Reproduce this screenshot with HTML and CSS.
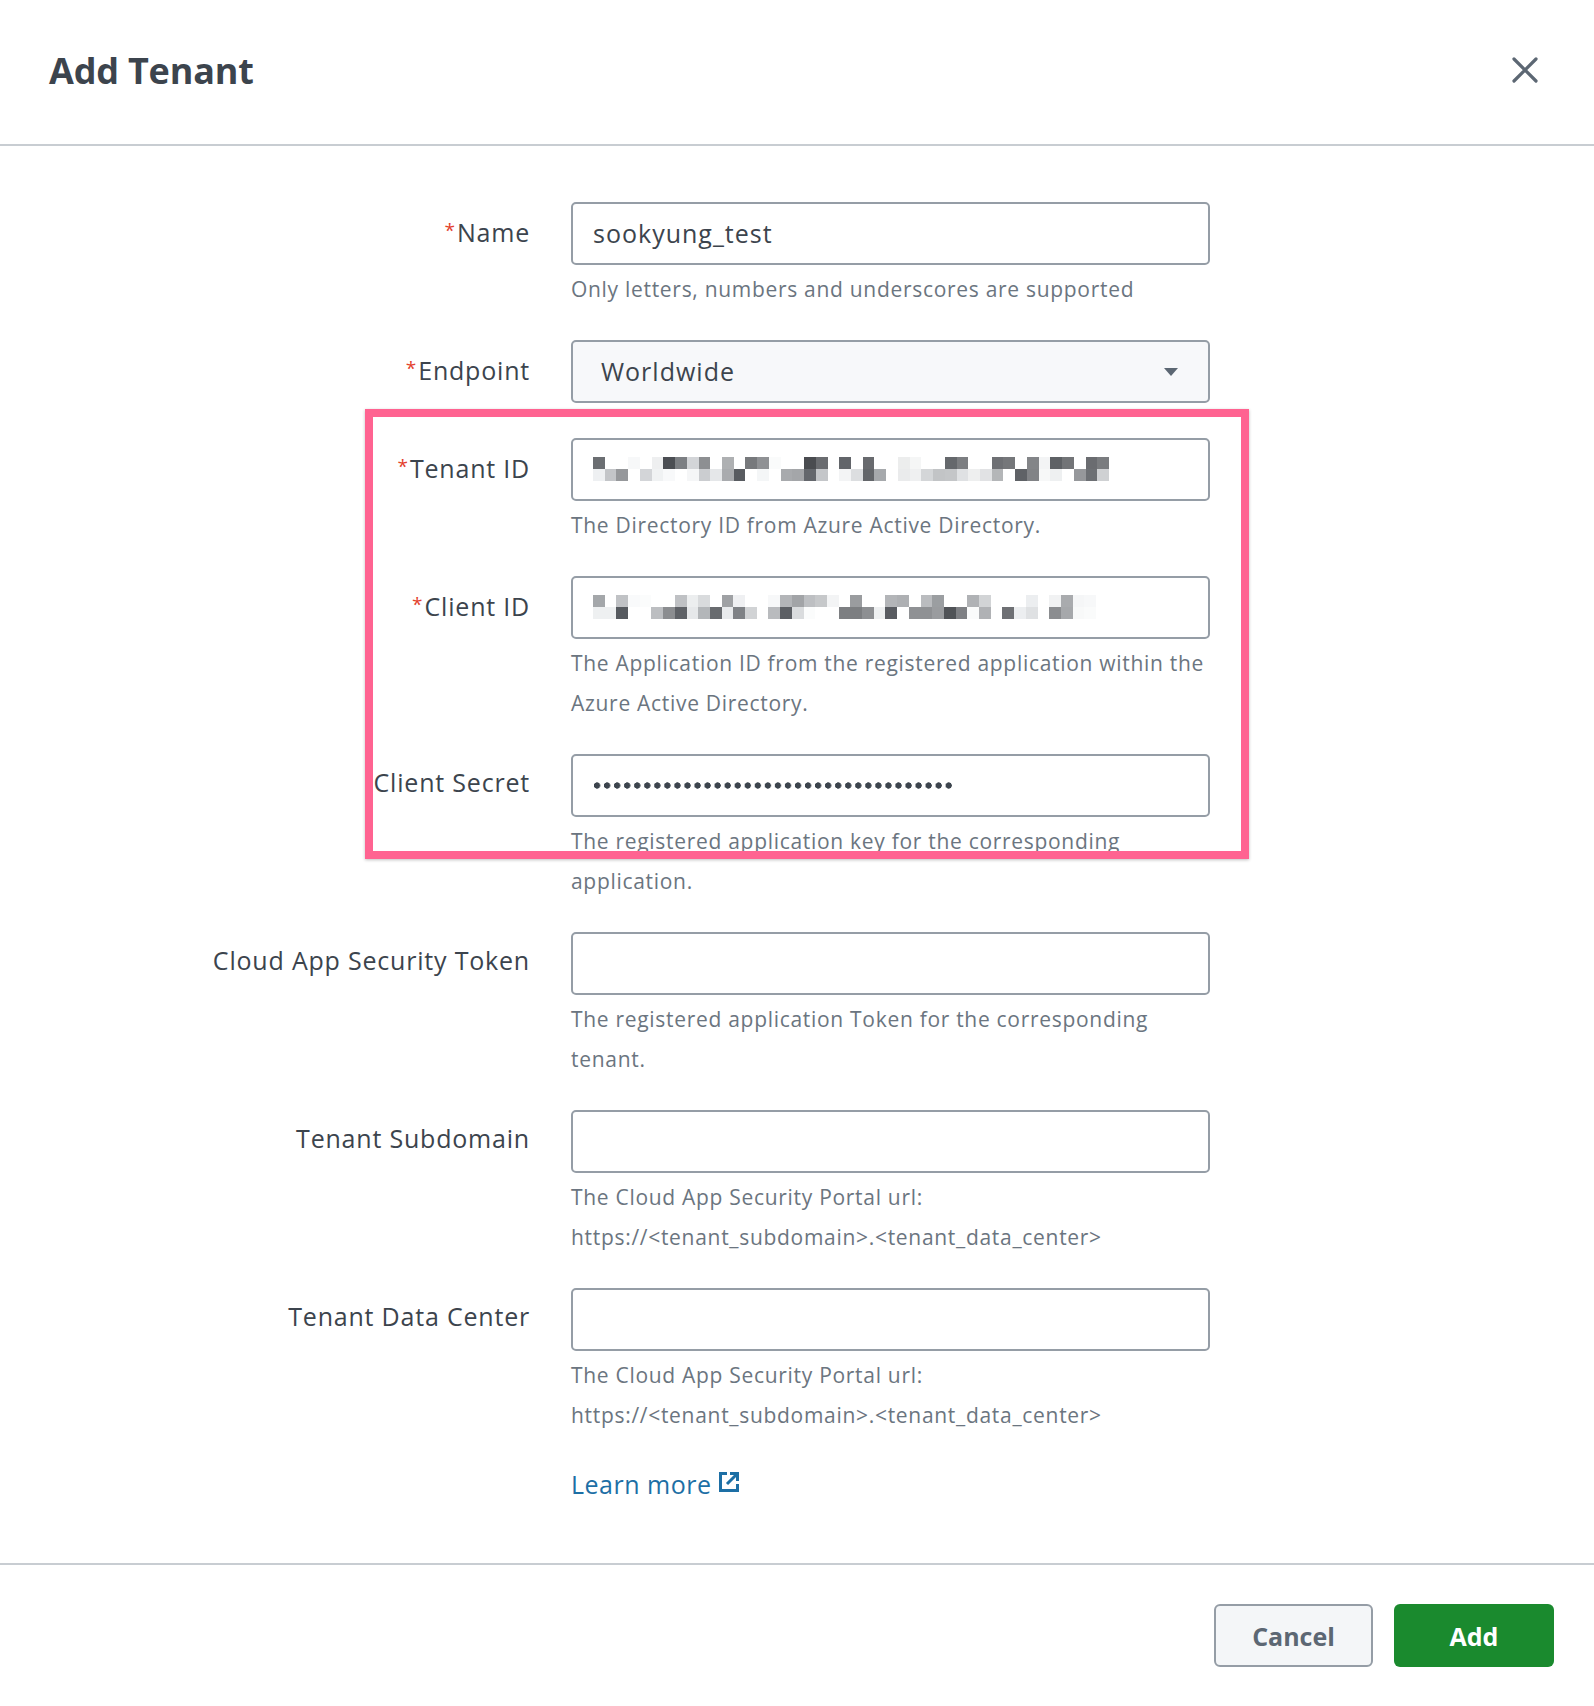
FILE: index.html
```html
<!DOCTYPE html>
<html lang="en">
<head>
<meta charset="utf-8">
<title>Add Tenant</title>
<link rel="stylesheet" href="styles.css">
</head>
<body>
<div class="modal">
  <header class="modal-header">
    <h1 class="modal-title">Add Tenant</h1>
    <button class="close-btn" aria-label="Close">
      <svg width="26" height="26" viewBox="0 0 26 26"><path d="M2 2 L24 24 M24 2 L2 24" stroke="#5c6773" stroke-width="3.2" stroke-linecap="round" fill="none"/></svg>
    </button>
  </header>

  <main class="modal-body">
    <div class="highlight"></div>
    <form class="form">
      <div class="row">
        <label class="label"><span class="req">*</span>Name</label>
        <div class="field">
          <div class="input"><span class="value">sookyung_test</span></div>
          <p class="help">Only letters, numbers and underscores are supported</p>
        </div>
      </div>

      <div class="row row-select">
        <label class="label"><span class="req">*</span>Endpoint</label>
        <div class="field">
          <div class="input select"><span class="value">Worldwide</span><span class="caret"></span></div>
        </div>
      </div>

      <div class="row">
        <label class="label"><span class="req">*</span>Tenant ID</label>
        <div class="field">
          <div class="input">
            <svg class="blur" width="516" height="24" viewBox="0 0 44 2" preserveAspectRatio="none" shape-rendering="crispEdges">
              <g>
                <rect x="0" y="0" width="1" height="1" fill="#6b6e72"/>
                <rect x="3" y="0" width="1" height="1" fill="#f7f8f9"/>
                <rect x="5" y="0" width="1" height="1" fill="#eeeff0"/>
                <rect x="6" y="0" width="1" height="1" fill="#4b4e53"/>
                <rect x="7" y="0" width="1" height="1" fill="#7c7f83"/>
                <rect x="8" y="0" width="1" height="1" fill="#d3d5d8"/>
                <rect x="9" y="0" width="1" height="1" fill="#8d8f92"/>
                <rect x="11" y="0" width="1" height="1" fill="#aeb0b2"/>
                <rect x="13" y="0" width="1" height="1" fill="#77797c"/>
                <rect x="14" y="0" width="1" height="1" fill="#8f9194"/>
                <rect x="15" y="0" width="1" height="1" fill="#fafbfb"/>
                <rect x="18" y="0" width="1" height="1" fill="#4a4c50"/>
                <rect x="19" y="0" width="1" height="1" fill="#6a6c70"/>
                <rect x="21" y="0" width="1" height="1" fill="#62656a"/>
                <rect x="23" y="0" width="1" height="1" fill="#686a6e"/>
                <rect x="26" y="0" width="1" height="1" fill="#eceded"/>
                <rect x="27" y="0" width="1" height="1" fill="#f5f6f6"/>
                <rect x="30" y="0" width="1" height="1" fill="#65686c"/>
                <rect x="31" y="0" width="1" height="1" fill="#7c7e81"/>
                <rect x="34" y="0" width="1" height="1" fill="#6e7074"/>
                <rect x="35" y="0" width="1" height="1" fill="#75777a"/>
                <rect x="37" y="0" width="1" height="1" fill="#838588"/>
                <rect x="38" y="0" width="1" height="1" fill="#f3f4f5"/>
                <rect x="39" y="0" width="1" height="1" fill="#5e6165"/>
                <rect x="40" y="0" width="1" height="1" fill="#727477"/>
                <rect x="42" y="0" width="1" height="1" fill="#6a6c70"/>
                <rect x="43" y="0" width="1" height="1" fill="#7a7c7f"/>
              </g>
              <g>
                <rect x="0" y="1" width="1" height="1" fill="#eef0f2"/>
                <rect x="1" y="1" width="1" height="1" fill="#c3c5c8"/>
                <rect x="2" y="1" width="1" height="1" fill="#96989b"/>
                <rect x="4" y="1" width="1" height="1" fill="#d3d5d8"/>
                <rect x="5" y="1" width="1" height="1" fill="#f0f2f3"/>
                <rect x="6" y="1" width="1" height="1" fill="#f8f9fa"/>
                <rect x="8" y="1" width="1" height="1" fill="#f5f6f7"/>
                <rect x="9" y="1" width="1" height="1" fill="#cbcdd0"/>
                <rect x="10" y="1" width="1" height="1" fill="#e5e7e9"/>
                <rect x="11" y="1" width="1" height="1" fill="#a9abae"/>
                <rect x="12" y="1" width="1" height="1" fill="#585b60"/>
                <rect x="14" y="1" width="1" height="1" fill="#f4f6f7"/>
                <rect x="16" y="1" width="1" height="1" fill="#a8aaad"/>
                <rect x="17" y="1" width="1" height="1" fill="#a4a6a9"/>
                <rect x="18" y="1" width="1" height="1" fill="#64676c"/>
                <rect x="19" y="1" width="1" height="1" fill="#c4c6c9"/>
                <rect x="21" y="1" width="1" height="1" fill="#f3f4f5"/>
                <rect x="22" y="1" width="1" height="1" fill="#dcdee0"/>
                <rect x="23" y="1" width="1" height="1" fill="#63666a"/>
                <rect x="24" y="1" width="1" height="1" fill="#a6a9ac"/>
                <rect x="26" y="1" width="1" height="1" fill="#eaebec"/>
                <rect x="27" y="1" width="1" height="1" fill="#eff0f1"/>
                <rect x="28" y="1" width="1" height="1" fill="#d4d6d8"/>
                <rect x="29" y="1" width="1" height="1" fill="#c2c4c6"/>
                <rect x="30" y="1" width="1" height="1" fill="#c4c6c8"/>
                <rect x="31" y="1" width="1" height="1" fill="#dfe1e3"/>
                <rect x="32" y="1" width="1" height="1" fill="#eeefef"/>
                <rect x="33" y="1" width="1" height="1" fill="#e1e2e4"/>
                <rect x="34" y="1" width="1" height="1" fill="#b4b6b8"/>
                <rect x="36" y="1" width="1" height="1" fill="#5f6266"/>
                <rect x="37" y="1" width="1" height="1" fill="#818386"/>
                <rect x="38" y="1" width="1" height="1" fill="#f7f8f8"/>
                <rect x="39" y="1" width="1" height="1" fill="#eef0f1"/>
                <rect x="41" y="1" width="1" height="1" fill="#96989b"/>
                <rect x="42" y="1" width="1" height="1" fill="#6d7074"/>
                <rect x="43" y="1" width="1" height="1" fill="#cfd1d3"/>
              </g>
            </svg>
          </div>
          <p class="help">The Directory ID from Azure Active Directory.</p>
        </div>
      </div>

      <div class="row">
        <label class="label"><span class="req">*</span>Client ID</label>
        <div class="field">
          <div class="input">
            <svg class="blur" width="503" height="24" viewBox="0 0 43 2" preserveAspectRatio="none" shape-rendering="crispEdges">
              <rect x="0" y="0" width="1" height="1" fill="#a4a7aa"/>
              <rect x="2" y="0" width="1" height="1" fill="#c0c2c5"/>
              <rect x="3" y="0" width="1" height="1" fill="#f9fafb"/>
              <rect x="4" y="0" width="1" height="1" fill="#fbfcfc"/>
              <rect x="7" y="0" width="1" height="1" fill="#bfc1c4"/>
              <rect x="8" y="0" width="1" height="1" fill="#eceeef"/>
              <rect x="9" y="0" width="1" height="1" fill="#d9dbdd"/>
              <rect x="11" y="0" width="1" height="1" fill="#9fa1a4"/>
              <rect x="12" y="0" width="1" height="1" fill="#eff0f2"/>
              <rect x="15" y="0" width="1" height="1" fill="#f7f8f9"/>
              <rect x="16" y="0" width="1" height="1" fill="#b3b5b8"/>
              <rect x="17" y="0" width="1" height="1" fill="#a2a4a7"/>
              <rect x="18" y="0" width="1" height="1" fill="#bdbfc2"/>
              <rect x="19" y="0" width="1" height="1" fill="#c6c8ca"/>
              <rect x="20" y="0" width="1" height="1" fill="#f3f4f5"/>
              <rect x="22" y="0" width="1" height="1" fill="#9a9c9f"/>
              <rect x="25" y="0" width="1" height="1" fill="#b3b5b8"/>
              <rect x="26" y="0" width="1" height="1" fill="#aeb0b3"/>
              <rect x="28" y="0" width="1" height="1" fill="#babcbf"/>
              <rect x="29" y="0" width="1" height="1" fill="#9b9ea1"/>
              <rect x="32" y="0" width="1" height="1" fill="#b0b2b5"/>
              <rect x="33" y="0" width="1" height="1" fill="#d2d4d6"/>
              <rect x="37" y="0" width="1" height="1" fill="#eceef0"/>
              <rect x="39" y="0" width="1" height="1" fill="#f1f2f3"/>
              <rect x="40" y="0" width="1" height="1" fill="#a9abae"/>
              <rect x="41" y="0" width="1" height="1" fill="#f5f6f7"/>
              <rect x="42" y="0" width="1" height="1" fill="#f7f8f9"/>
              <rect x="0" y="1" width="1" height="1" fill="#eef0f1"/>
              <rect x="1" y="1" width="1" height="1" fill="#eef0f1"/>
              <rect x="2" y="1" width="1" height="1" fill="#565a5f"/>
              <rect x="5" y="1" width="1" height="1" fill="#bcbec1"/>
              <rect x="6" y="1" width="1" height="1" fill="#8b8d90"/>
              <rect x="7" y="1" width="1" height="1" fill="#5f6267"/>
              <rect x="8" y="1" width="1" height="1" fill="#e6e8ea"/>
              <rect x="9" y="1" width="1" height="1" fill="#b3b6b9"/>
              <rect x="10" y="1" width="1" height="1" fill="#686b6f"/>
              <rect x="11" y="1" width="1" height="1" fill="#e8eaec"/>
              <rect x="12" y="1" width="1" height="1" fill="#7f8286"/>
              <rect x="13" y="1" width="1" height="1" fill="#d1d3d5"/>
              <rect x="15" y="1" width="1" height="1" fill="#b9bbbe"/>
              <rect x="16" y="1" width="1" height="1" fill="#5c5f64"/>
              <rect x="17" y="1" width="1" height="1" fill="#dadcde"/>
              <rect x="18" y="1" width="1" height="1" fill="#fbfcfc"/>
              <rect x="21" y="1" width="1" height="1" fill="#7d7f82"/>
              <rect x="22" y="1" width="1" height="1" fill="#7c7e81"/>
              <rect x="23" y="1" width="1" height="1" fill="#8d8f92"/>
              <rect x="24" y="1" width="1" height="1" fill="#eef0f1"/>
              <rect x="25" y="1" width="1" height="1" fill="#595c61"/>
              <rect x="27" y="1" width="1" height="1" fill="#8f9194"/>
              <rect x="28" y="1" width="1" height="1" fill="#8f9194"/>
              <rect x="29" y="1" width="1" height="1" fill="#9a9c9f"/>
              <rect x="30" y="1" width="1" height="1" fill="#505357"/>
              <rect x="31" y="1" width="1" height="1" fill="#7e8084"/>
              <rect x="32" y="1" width="1" height="1" fill="#fafbfb"/>
              <rect x="33" y="1" width="1" height="1" fill="#b0b2b5"/>
              <rect x="35" y="1" width="1" height="1" fill="#6e7074"/>
              <rect x="36" y="1" width="1" height="1" fill="#eceef0"/>
              <rect x="37" y="1" width="1" height="1" fill="#dfe1e3"/>
              <rect x="39" y="1" width="1" height="1" fill="#8b8d90"/>
              <rect x="40" y="1" width="1" height="1" fill="#a6a8ab"/>
              <rect x="41" y="1" width="1" height="1" fill="#f8f9f9"/>
              <rect x="42" y="1" width="1" height="1" fill="#fafbfb"/>
            </svg>
          </div>
          <p class="help">The Application ID from the registered application within the<br>Azure Active Directory.</p>
        </div>
      </div>

      <div class="row">
        <label class="label">Client Secret</label>
        <div class="field">
          <div class="input"><span class="dots" aria-label="password"></span></div>
          <p class="help">The registered application key for the corresponding<br>application.</p>
        </div>
      </div>

      <div class="row">
        <label class="label">Cloud App Security Token</label>
        <div class="field">
          <div class="input"></div>
          <p class="help">The registered application Token for the corresponding<br>tenant.</p>
        </div>
      </div>

      <div class="row">
        <label class="label">Tenant Subdomain</label>
        <div class="field">
          <div class="input"></div>
          <p class="help">The Cloud App Security Portal url:<br>https://&lt;tenant_subdomain&gt;.&lt;tenant_data_center&gt;</p>
        </div>
      </div>

      <div class="row">
        <label class="label">Tenant Data Center</label>
        <div class="field">
          <div class="input"></div>
          <p class="help">The Cloud App Security Portal url:<br>https://&lt;tenant_subdomain&gt;.&lt;tenant_data_center&gt;</p>
        </div>
      </div>

      <div class="row row-link">
        <span class="label"></span>
        <div class="field">
          <a class="learn" href="#">Learn more<svg class="ext" width="24" height="24" viewBox="0 0 24 24"><path d="M10 3.5 H3.5 V20.5 H20.5 V14" fill="none" stroke="#1d6fa5" stroke-width="3"/><path d="M13 3.5 H20.5 V11 M20.5 3.5 L10 14" fill="none" stroke="#1d6fa5" stroke-width="3"/></svg></a>
        </div>
      </div>
    </form>
  </main>

  <footer class="modal-footer">
    <button class="btn btn-cancel">Cancel</button>
    <button class="btn btn-add">Add</button>
  </footer>
</div>
</body>
</html>
```

FILE: styles.css
```css
* { box-sizing: border-box; }

html, body {
  margin: 0;
  padding: 0;
  background: #ffffff;
}

body {
  font-family: "Open Sans", "Lato", sans-serif;
  color: #3c444d;
  width: 1594px;
  height: 1706px;
  overflow: hidden;
}

.modal {
  display: flex;
  flex-direction: column;
  height: 1706px;
}

.modal-header {
  height: 146px;
  border-bottom: 2px solid #c8cdd2;
  display: flex;
  align-items: center;
  justify-content: space-between;
  padding: 0 56px 4px 49px;
}

.modal-title {
  margin: 0;
  font-size: 36px;
  font-weight: 700;
  color: #3c444d;
  letter-spacing: -0.2px;
}

.close-btn {
  background: none;
  border: 0;
  padding: 0;
  width: 26px;
  height: 26px;
  display: flex;
}

.modal-body {
  position: relative;
  flex: 1;
  padding-top: 56px;
}

.highlight {
  position: absolute;
  left: 365px;
  top: 263px;
  width: 884px;
  height: 450px;
  border: 8px solid #ff6391;
  box-shadow: 0 1px 3px rgba(0, 0, 0, 0.25);
  pointer-events: none;
}

.form {
  display: flex;
  flex-direction: column;
  gap: 31px;
}

.row {
  display: grid;
  grid-template-columns: 530px 639px;
  column-gap: 41px;
  align-items: start;
}

.row-select { margin-bottom: 4px; }
.row-link { margin-top: -2px; }

.label {
  text-align: right;
  font-size: 25px;
  letter-spacing: 0.8px;
  line-height: 57px;
  color: #3c444d;
  white-space: nowrap;
}

.req {
  color: #e3412d;
  font-size: 19px;
  letter-spacing: 0;
  vertical-align: 5px;
  margin-right: 2px;
}

.field {
  display: flex;
  flex-direction: column;
}

.input {
  height: 63px;
  border: 2px solid #959da6;
  border-radius: 5px;
  background: #ffffff;
  display: flex;
  align-items: center;
  padding: 0 20px 2px;
  font-size: 25px;
  letter-spacing: 1px;
  color: #3c444d;
}

.select {
  background: #f7f8fa;
  padding: 0 30px 2px 28px;
  justify-content: space-between;
}

.caret {
  width: 0;
  height: 0;
  border-left: 7px solid transparent;
  border-right: 7px solid transparent;
  border-top: 8px solid #5c6773;
  margin-top: 2px;
}

.blur {
  display: block;
}

.dots {
  display: block;
  width: 361px;
  height: 7px;
  margin-left: 1px;
  margin-top: 2px;
  background-image: radial-gradient(circle at 3px 3.5px, #3c444d 2.9px, transparent 3.4px);
  background-size: 10.05px 7px;
  background-repeat: repeat-x;
}

.help {
  margin: 4px 0 0;
  font-size: 21px;
  line-height: 40px;
  color: #6b7580;
  letter-spacing: 0.7px;
  white-space: nowrap;
}

.learn {
  display: inline-flex;
  align-items: center;
  gap: 6px;
  font-size: 25px;
  letter-spacing: 0.5px;
  line-height: 40px;
  color: #1d6fa5;
  text-decoration: none;
}

.ext { display: block; margin-top: -4px; }

.modal-footer {
  height: 143px;
  border-top: 2px solid #c8cdd2;
  display: flex;
  justify-content: flex-end;
  align-items: flex-start;
  gap: 21px;
  padding: 39px 40px 0 0;
}

.btn {
  height: 63px;
  width: 159px;
  border-radius: 6px;
  font-family: "Open Sans", "Lato", sans-serif;
  font-size: 25px;
  font-weight: 700;
  cursor: pointer;
}

.btn-cancel {
  background: #f4f6f8;
  border: 2px solid #959da6;
  color: #5c6773;
}

.btn-add {
  width: 160px;
  background: #1a8a2e;
  border: 0;
  color: #ffffff;
}
```
